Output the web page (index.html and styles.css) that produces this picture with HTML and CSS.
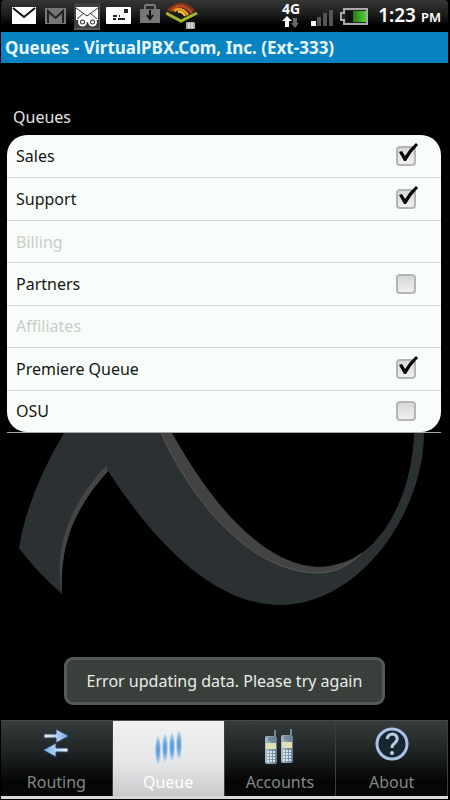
FILE: index.html
```html
<!DOCTYPE html>
<html lang="en">
<head>
<meta charset="utf-8">
<meta name="viewport" content="width=device-width, initial-scale=1">
<title>Queues</title>
<link rel="stylesheet" href="styles.css">
</head>
<body>
<svg class="defs" width="0" height="0" aria-hidden="true">
  <defs>
    <linearGradient id="arrowBlue" x1="0" x2="1"><stop offset="0" stop-color="#eef6fb"/><stop offset="1" stop-color="#74a8e0"/></linearGradient>
    <linearGradient id="arrowBlueBack" x1="1" x2="0"><stop offset="0" stop-color="#eef6fb"/><stop offset="1" stop-color="#74a8e0"/></linearGradient>
    <radialGradient id="person"><stop offset="0" stop-color="#4a92d3"/><stop offset=".6" stop-color="#80b2de"/><stop offset="1" stop-color="#c3d9ee" stop-opacity=".7"/></radialGradient>
    <linearGradient id="phoneBody" x1="0" x2="1"><stop offset="0" stop-color="#a3bccb"/><stop offset="1" stop-color="#64798d"/></linearGradient>
    <linearGradient id="green" x1="0" x2="1"><stop offset="0" stop-color="#257b18"/><stop offset="1" stop-color="#50d034"/></linearGradient>
    <symbol id="tick" viewBox="0 0 24 24"><path d="M3 9l3-1 3 5Q13 6 20 0l2 2Q15 9 10 18H8Z"/></symbol>
    <g id="phone">
      <path d="M9 1h2v8H9z" fill="#71879a"/>
      <path d="M0 9q0-2 2-2h8q2 0 2 2v24q0 2-2 2H2q-2 0-2-2Z" fill="url(#phoneBody)"/>
      <path d="M3 9h6M3 11h6" stroke="#62798d" stroke-width="1"/>
      <path d="M1 14h10v6H1z" fill="#dfdfb5"/>
      <path d="M2 23h8M2 26h8M2 29h8M2 32h8" stroke="#d8e4ec" stroke-width="2" stroke-dasharray="2 1"/>
    </g>
  </defs>
</svg>

<div class="screen">
  <div class="status">
    <div class="status-group">
      <svg width="27" height="32" viewBox="12 0 27 32" aria-hidden="true"><path d="M12 7h24v17H12z" fill="#fff"/><path d="M13 8l11 9 11-9" fill="none" stroke="#111" stroke-width="2"/></svg>
      <svg width="23" height="32" viewBox="45 0 23 32" aria-hidden="true"><path d="M45 8h21v16H45z" fill="#777"/><path d="M48 23V11l7.500 7L63 11v12" fill="none" stroke="#222" stroke-width="2"/></svg>
      <svg width="26" height="32" viewBox="74 0 26 32" aria-hidden="true"><path d="M74 3h26v27H74z" fill="#3e4040"/><path d="M74 29h26V5" fill="none" stroke="#777"/><path d="M76 7h22v13H76z" fill="#fff"/><path d="M76 8l11 8 11-8M77 19l7-6M97 19l-7-6" fill="none" stroke="#333" stroke-width="1"/><circle cx="82.500" cy="22" r="3.500" fill="#333" stroke="#fff" stroke-width="2"/><circle cx="92.500" cy="22" r="3.500" fill="#333" stroke="#fff" stroke-width="2"/><circle cx="82.500" cy="22" r="1.500" fill="#fff"/><circle cx="92.500" cy="22" r="1.500" fill="#fff"/><path d="M86 21h3" stroke="#fff" stroke-width="2"/></svg>
      <svg width="28" height="32" viewBox="106 0 28 32" aria-hidden="true"><rect x="106" y="7" width="25" height="17" rx="1" fill="#fff"/><path d="M124 9h4v4h-4z" fill="#222"/><path d="M113 16h4M119 16h1M113 19h3M118 19h7" stroke="#222" stroke-width="2"/></svg>
      <svg width="20" height="32" viewBox="140 0 20 32" aria-hidden="true"><path d="M145 9V6q0-1 1-1h8q1 0 1 1v3" fill="none" stroke="#777" stroke-width="2"/><path d="M140 9h20v14h-20z" fill="#777"/><path d="M150 10v8M147 15l3 4 3-4" fill="none" stroke="#111" stroke-width="2"/></svg>
      <svg width="33" height="32" viewBox="166 0 33 32" aria-hidden="true"><path d="M166 13l15 8 16-8" fill="none" stroke="#a4b62b" stroke-width="3"/><path d="M168 11Q181-3 194 11" fill="none" stroke="#74351c" stroke-width="3"/><path d="M171 11Q181 0 192 13" fill="none" stroke="#bd471d" stroke-width="3"/><path d="M174 11q7-5 14 4" fill="none" stroke="#eb9725" stroke-width="3"/><path d="M178 12q4-1 7 4" fill="none" stroke="#f3ca38" stroke-width="2"/><rect x="186" y="22" width="9" height="7" rx="1" fill="#a9a9a9"/><path d="M189 23v5M192 23v5" stroke="#fff"/></svg>
    </div>
    <div class="status-group">
      <svg width="22" height="32" viewBox="283 0 22 32" aria-hidden="true"><text class="network" x="283" y="14">4G</text><path d="M288 16l-5 5h3v6h4v-6h3z" fill="#fff"/><path d="M296 28l-4-5h2v-5h4v5h2z" fill="#666"/></svg>
      <svg width="24" height="32" viewBox="311 0 24 32" aria-hidden="true"><path d="M312 21h5v5h-5z" fill="#fff"/><path d="M318 17h4v9h-4zM324 13h4v13h-4zM330 10h4v16h-4z" fill="#555"/></svg>
      <svg width="32" height="32" viewBox="341 0 32 32" aria-hidden="true"><path d="M345 9h23v15h-23v-4h-3v-7h3z" fill="#222" stroke="#aaa" stroke-width="2"/><path d="M347 11h8v11h-8z" fill="#111"/><path d="M354 11h13v11h-13z" fill="url(#green)"/></svg>
      <time class="clock">1:23 <small>PM</small></time>
    </div>
  </div>
  <h1 class="title">Queues - VirtualPBX.Com, Inc. (Ext-333)</h1>

  <main class="content">
    <h2 class="heading">Queues</h2>
    <div class="panel">
      <ul class="list">
        <li class="row"><label for="sales">Sales</label><span class="check"><input id="sales" type="checkbox" checked><svg class="tick" aria-hidden="true"><use href="#tick"/></svg></span></li>
        <li class="row"><label for="support">Support</label><span class="check"><input id="support" type="checkbox" checked><svg class="tick" aria-hidden="true"><use href="#tick"/></svg></span></li>
        <li class="row row-off">Billing</li>
        <li class="row"><label for="partners">Partners</label><span class="check"><input id="partners" type="checkbox"><svg class="tick" aria-hidden="true"><use href="#tick"/></svg></span></li>
        <li class="row row-off">Affiliates</li>
        <li class="row"><label for="premiere">Premiere Queue</label><span class="check"><input id="premiere" type="checkbox" checked><svg class="tick" aria-hidden="true"><use href="#tick"/></svg></span></li>
        <li class="row"><label for="osu">OSU</label><span class="check"><input id="osu" type="checkbox"><svg class="tick" aria-hidden="true"><use href="#tick"/></svg></span></li>
      </ul>
    </div>
    <svg class="ribbon" viewBox="1 433 447 175" aria-hidden="true">
      <path d="M64 433Q28 493 19 548Q36 571 62 594C58 549 73 510 108 471C155 543 214 605 280 605C360 605 424 512 424 433H414C413 475 397 527 362 553Q343 569 319 568C254 567 200 484 172 433Z" fill="#2b3132"/>
      <path d="M62 594C53 548 70 504 106 466L108 471C73 510 60 545 62 594Z" fill="#454545"/>
      <path d="M161 433H172C200 484 256 566 319 567Q343 566 362 553Q343 573 320 573C252 574 193 503 161 433Z" fill="#444344"/>
      <path d="M161 433C193 503 252 574 320 573Q343 572 362 553" fill="none" stroke="#565859"/>
    </svg>
    <p class="toast" role="status">Error updating data. Please try again</p>
  </main>

  <nav class="tabs">
    <a class="tab" href="#routing">
      <svg width="36" height="40" viewBox="0 0 36 40" aria-hidden="true"><path d="M6 9h12V4l13 7-13 7v-5H6z" fill="url(#arrowBlue)" stroke="#27405f" stroke-width="1"/><path d="M30 23H18v-5L5 25l13 7v-5h12z" fill="url(#arrowBlueBack)" stroke="#27405f" stroke-width="1"/></svg>
      <span>Routing</span>
    </a>
    <a class="tab tab-on" href="#queue" aria-current="page">
      <svg width="36" height="40" viewBox="0 0 36 40" aria-hidden="true"><g fill="url(#person)"><ellipse cx="8" cy="25" rx="3" ry="14"/><ellipse cx="15" cy="23" rx="3" ry="14"/><ellipse cx="22" cy="22" rx="3" ry="14"/><ellipse cx="29" cy="20" rx="3" ry="14"/></g></svg>
      <span>Queue</span>
    </a>
    <a class="tab" href="#accounts">
      <svg width="36" height="40" viewBox="0 0 36 40" aria-hidden="true"><use href="#phone" x="3" y="4"/><use href="#phone" x="19" y="3"/></svg>
      <span>Accounts</span>
    </a>
    <a class="tab" href="#about">
      <svg width="36" height="40" viewBox="0 0 36 40" aria-hidden="true"><circle cx="18" cy="19" r="15" fill="#182630" stroke="#a9c4e2" stroke-width="3"/><path d="M13 14q1-5 6-5 5 1 4 6-1 2-3 4-2 1-2 4" fill="none" stroke="#b5cce5" stroke-width="3"/><circle cx="18" cy="28" r="2" fill="#b5cce5"/></svg>
      <span>About</span>
    </a>
  </nav>
</div>
</body>
</html>
```

FILE: styles.css
```css
* { box-sizing: border-box; }
body {
  margin: 0;
  background: #000;
  color: #fff;
  font-family: "Noto Sans", "Open Sans", sans-serif;
  font-size: 16px;
}
.defs { position: absolute; }
.screen {
  display: flex;
  flex-direction: column;
  min-height: 100vh;
  padding: 0 2px 1px 1px;
}
.status {
  display: flex;
  justify-content: space-between;
  height: 32px;
  padding: 0 7px 0 11px;
  background: linear-gradient(#363636, #1c1c1c 45%, #000 80%);
  border-radius: 4px 4px 0 0;
}
.status-group { display: flex; align-items: center; gap: 6px; }
.network { font: bold 14px "Noto Sans", sans-serif; fill: #fff; }
.clock { font-size: 19px; font-weight: 600; line-height: 32px; white-space: nowrap; }
.clock small { font-size: 13px; }
.title {
  margin: 0;
  padding: 0 4px;
  background: #0783c2;
  color: #e9f8ff;
  font-size: 17px;
  font-weight: 700;
  line-height: 31px;
}
.content { display: flex; flex: 1; flex-direction: column; }
.heading {
  margin: 42px 0 6px 12px;
  color: #e4e4e4;
  font-size: 16px;
  font-weight: 400;
  line-height: 24px;
}
.panel { margin: 0 7px 0 6px; border-bottom: 1px solid #a5a8a5; }
.list {
  display: grid;
  grid-auto-rows: 1fr;
  height: 297px;
  margin: 0;
  padding: 0;
  list-style: none;
  background: #f8fdf9;
  border-radius: 20px;
  overflow: hidden;
}
.row {
  display: flex;
  align-items: center;
  justify-content: space-between;
  padding: 0 25px 0 9px;
  color: #151515;
}
.row + .row { border-top: 1px solid #d2d5d2; }
.row-off { color: #c9cdca; }
.check { display: flex; position: relative; }
.check input {
  appearance: none;
  width: 20px;
  height: 20px;
  margin: 0;
  border: 2px solid #b4b6b4;
  border-radius: 4px;
  background: linear-gradient(#d6d8d6, #efefef);
}
.tick {
  position: absolute;
  top: -3px;
  left: 0;
  display: none;
  width: 24px;
  height: 24px;
  fill: #050505;
  pointer-events: none;
}
input:checked + .tick { display: block; }
.ribbon { display: block; width: 100%; }
.toast {
  align-self: center;
  margin: 49px 0 14px;
  padding: 0 20px;
  border: 3px solid #555a57;
  border-radius: 9px;
  background: #39403b;
  color: #e8ece8;
  line-height: 42px;
}
.tabs {
  display: grid;
  grid-template-columns: repeat(4, 1fr);
  border-bottom: 3px solid #d8d8d8;
}
.tab {
  display: flex;
  flex-direction: column;
  align-items: center;
  gap: 3px;
  height: 76px;
  padding-top: 4px;
  border-right: 1px solid #3c3f3f;
  border-top: 1px solid #4a4d4d;
  background: linear-gradient(#363b3b, #202424 40%, #050606 80%);
  color: #858888;
  font-size: 16px;
  line-height: 28px;
  text-decoration: none;
}
.tab svg { flex: none; }
.tab-on {
  background: linear-gradient(#f1f1f1, #e5e6e7 55%, #c9cacb);
  color: #fff;
}
```
